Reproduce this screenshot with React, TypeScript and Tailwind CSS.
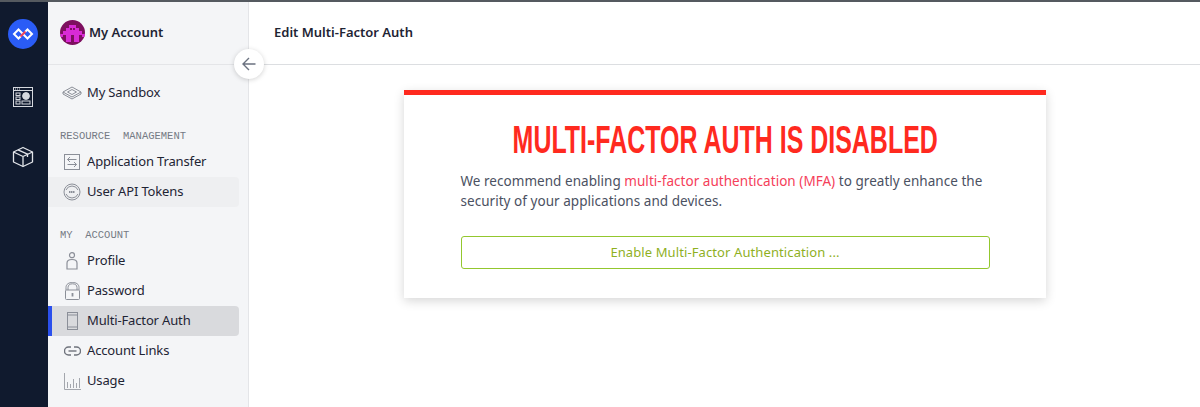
import React from "react";

const BODY = "font-['Noto_Sans','Open_Sans',sans-serif]";

function Logo() {
  return (
    <svg viewBox="0 0 30 30" className="h-[30px] w-[30px]">
      <circle cx="15" cy="15" r="15" fill="#2a5cf6" />
      <path
        d="M13 17 L10.5 19.5 L6 15 L10.5 10.5 L15 15 L19.5 19.5 L24 15 L19.5 10.5 L17 13"
        fill="none"
        stroke="#fff"
        strokeWidth="2"
      />
      <path d="M12.5 17.5 L17.5 12.5" stroke="#f0435a" strokeWidth="2" />
    </svg>
  );
}

function AppsIcon() {
  return (
    <svg viewBox="0 0 20 20" className="h-5 w-5" fill="none" stroke="#d5d8de" strokeWidth="1">
      <rect x="0.5" y="0.5" width="19" height="19" />
      <path d="M0.5 3.5 H19.5" />
      <path d="M2 2 H3 M4 2 H5 M6 2 H7" />
      <rect x="3" y="6" width="4" height="2.5" />
      <rect x="3" y="10" width="4" height="2.5" />
      <rect x="3" y="14" width="4" height="3" />
      <rect x="9" y="14" width="8" height="3" />
      <circle cx="13" cy="9" r="3.4" fill="#d5d8de" />
    </svg>
  );
}

function BoxIcon() {
  return (
    <svg viewBox="0 0 22 22" className="h-[22px] w-[22px]" fill="none" stroke="#e3e5ea" strokeWidth="1.3" strokeLinejoin="round">
      <path d="M11 1.5 L20.5 6 V16 L11 20.5 L1.5 16 V6 Z" />
      <path d="M1.5 6 L11 10.5 L20.5 6 M11 10.5 V20.5" />
      <path d="M6 3.8 L15.5 8.2 V11" />
    </svg>
  );
}

function Avatar() {
  // blocky identicon
  return (
    <svg viewBox="0 0 25 25" className="h-[25px] w-[25px]">
      <clipPath id="av">
        <circle cx="12.5" cy="12.5" r="12.5" />
      </clipPath>
      <g clipPath="url(#av)">
        <rect width="25" height="25" fill="#7d0f5f" />
        <path
          d="M9 5h7v3h-7z M6 8h13v3h-13z M3 11h19v4h-19z M6 15h5v7h-5z M14 15h5v7h-5z M0 14h3v3h-3z M22 14h3v3h-3z"
          fill="#d92bd6"
        />
        <path d="M10 8h2v2h-2z M13 8h2v2h-2z" fill="#7d0f5f" />
      </g>
    </svg>
  );
}

function Sandbox() {
  return (
    <svg viewBox="0 0 20 14" className="h-[14px] w-5" fill="none" stroke="#8b8f98" strokeWidth="1">
      <path d="M10 1 L19 6 L10 11 L1 6 Z" />
      <path d="M10 3.5 L14.5 6 L10 8.5 L5.5 6 Z" />
      <path d="M1 6 V8 L10 13 L19 8 V6" />
    </svg>
  );
}

function Transfer() {
  return (
    <svg viewBox="0 0 16 16" className="h-4 w-4" fill="none" stroke="#8b8f98" strokeWidth="1">
      <rect x="0.5" y="0.5" width="15" height="15" />
      <path d="M12.5 5.5 H3.5 L6 3 M3.5 5.5 L6 8 M3.5 10.5 H12.5 L10 8 M12.5 10.5 L10 13" />
    </svg>
  );
}

function ApiIcon() {
  return (
    <svg viewBox="0 0 18 18" className="h-[18px] w-[18px]" fill="none" stroke="#8b8f98" strokeWidth="1">
      <circle cx="9" cy="9" r="8" />
      <path d="M3 7 A6.5 6.5 0 0 1 15 7 M3 11 A6.5 6.5 0 0 0 15 11" />
      <path d="M6 9 H12" strokeWidth="2.2" strokeDasharray="1.5 0.5" />
    </svg>
  );
}

function ProfileIcon() {
  return (
    <svg viewBox="0 0 12 18" className="h-[18px] w-3" fill="none" stroke="#8b8f98" strokeWidth="1.2">
      <circle cx="6" cy="3.2" r="2.5" />
      <path d="M1 17 V11 C1 8.5 3 7.5 6 7.5 C9 7.5 11 8.5 11 11 V17 Z" />
    </svg>
  );
}

function LockIcon() {
  return (
    <svg viewBox="0 0 15 18" className="h-[18px] w-[15px]" fill="none" stroke="#8b8f98" strokeWidth="1">
      <path d="M3 8 V5.5 C3 3 5 1.8 7.5 1.8 C10 1.8 12 3 12 5.5 V8" />
      <path d="M1 8 V5.5 C1 2 4 0.5 7.5 0.5 C11 0.5 14 2 14 5.5 V8" />
      <rect x="0.5" y="8" width="14" height="9.5" rx="1" />
      <path d="M7.5 11 V14.5" strokeWidth="1.8" />
    </svg>
  );
}

function PhoneIcon() {
  return (
    <svg viewBox="0 0 11 18" className="h-[18px] w-[11px]" fill="none" stroke="#8b8f98" strokeWidth="1">
      <rect x="0.5" y="0.5" width="10" height="17" />
      <path d="M0.5 3 H10.5 M0.5 15 H10.5" />
    </svg>
  );
}

function LinkIcon() {
  return (
    <svg viewBox="0 0 17 10" className="h-[10px] w-[17px]" fill="none" stroke="#6f737c" strokeWidth="1.4">
      <path d="M7 1 H4.5 A3.8 3.8 0 0 0 4.5 9 H7 M10 1 H12.5 A3.8 3.8 0 0 1 12.5 9 H10" />
      <path d="M4.5 5 H12.5" />
    </svg>
  );
}

function UsageIcon() {
  return (
    <svg viewBox="0 0 17 17" className="h-[17px] w-[17px]" fill="none" stroke="#a3a6ad" strokeWidth="1">
      <path d="M0.5 0 V16.5 H17" />
      <path d="M3.5 15 V9 M6.5 15 V11 M9.5 15 V6 M12.5 15 V10 M15.5 15 V5" />
    </svg>
  );
}

function NavItem({
  icon,
  label,
  state,
}: {
  icon: React.ReactNode;
  label: string;
  state?: "hover" | "active";
}) {
  const bg = state === "active" ? "bg-[#d9dadd]" : state === "hover" ? "bg-[#eeeff1]" : "";
  return (
    <div className={`relative flex h-[30px] items-center rounded-r ${bg}`}>
      {state === "active" && <div className="absolute inset-y-0 left-0 w-1 bg-[#2b50ed]" />}
      <div className="flex w-[39px] shrink-0 justify-center pl-[9px]">
        <div className="flex w-[22px] justify-center">{icon}</div>
      </div>
      <span className="text-[13px] tracking-[-0.15px] text-[#1e2434]">{label}</span>
    </div>
  );
}

function SectionLabel({ children }: { children: React.ReactNode }) {
  return (
    <div className="whitespace-pre pl-3 font-['Liberation_Mono',monospace] text-[10.5px] leading-[14px] text-[#757a84]">
      {children}
    </div>
  );
}

export default function App() {
  return (
    <div className={`flex h-[407px] w-[1200px] overflow-hidden border-t-2 border-[#555a60] bg-white ${BODY}`}>
      <div className="flex w-12 shrink-0 flex-col items-center bg-[#101a2e] pt-[17px] pr-[2px]">
        <Logo />
        <div className="mt-[38px]">
          <AppsIcon />
        </div>
        <div className="mt-[39px]">
          <BoxIcon />
        </div>
      </div>

      <div className="relative w-[201px] shrink-0 border-r border-[#e4e5e8] bg-[#f4f5f7]">
        <div className="flex h-[63px] items-center gap-1 border-b border-[#e4e5e8] pb-[2px] pl-3">
          <Avatar />
          <span className="pt-px text-[13px] font-semibold text-[#1e2434]">My Account</span>
        </div>
        <div className="w-[191px] pt-[13px]">
          <NavItem icon={<Sandbox />} label="My Sandbox" />
          <div className="mt-[21px] mb-1">
            <SectionLabel>RESOURCE  MANAGEMENT</SectionLabel>
          </div>
          <NavItem icon={<Transfer />} label="Application Transfer" />
          <NavItem icon={<ApiIcon />} label="User API Tokens" state="hover" />
          <div className="mt-[21px] mb-1">
            <SectionLabel>MY  ACCOUNT</SectionLabel>
          </div>
          <NavItem icon={<ProfileIcon />} label="Profile" />
          <NavItem icon={<LockIcon />} label="Password" />
          <NavItem icon={<PhoneIcon />} label="Multi-Factor Auth" state="active" />
          <NavItem icon={<LinkIcon />} label="Account Links" />
          <NavItem icon={<UsageIcon />} label="Usage" />
        </div>
        <div className="absolute top-[47px] -right-[16px] z-10 flex h-[30px] w-[30px] items-center justify-center rounded-full bg-white shadow-[0_1px_5px_rgba(0,0,0,0.18)]">
          <svg viewBox="0 0 16 16" className="h-4 w-4" fill="none" stroke="#6b7280" strokeWidth="1.4">
            <path d="M14.5 8 H2 M8 2 L2 8 L8 14" />
          </svg>
        </div>
      </div>

      <div className="min-w-0 flex-1">
        <div className="flex h-[63px] items-center border-b border-[#dcdee1] pb-[2px] pl-[25px]">
          <span className="pt-px text-[13px] font-semibold text-[#1e2434]">Edit Multi-Factor Auth</span>
        </div>
        <div className="pt-[25px]">
          <div className="mx-auto h-[208px] w-[642px] border-t-[5px] border-[#ff2a1f] bg-white px-[57px] shadow-[0_3px_10px_rgba(0,0,0,0.16)]">
            <div className="mt-[22px] flex justify-center pl-px">
              <h1 className="shrink-0 scale-x-[0.64] whitespace-nowrap font-['Liberation_Sans',sans-serif] text-[39px] leading-[46px] font-bold text-[#ff2a1f]">
                MULTI-FACTOR AUTH IS DISABLED
              </h1>
            </div>
            <p className="mt-[8px] w-[528px] text-[13.5px] leading-[20px] tracking-[0.04px] text-[#4b5162]">
              We recommend enabling <span className="text-[#f5405a]">multi-factor authentication (MFA)</span> to greatly
              enhance the security of your applications and devices.
            </p>
            <button className="mt-[25px] h-[33px] w-[529px] rounded-[3px] border border-[#93c72e] text-[13px] tracking-[0.1px] text-[#8fb01f]">
              Enable Multi-Factor Authentication ...
            </button>
          </div>
        </div>
      </div>
    </div>
  );
}
